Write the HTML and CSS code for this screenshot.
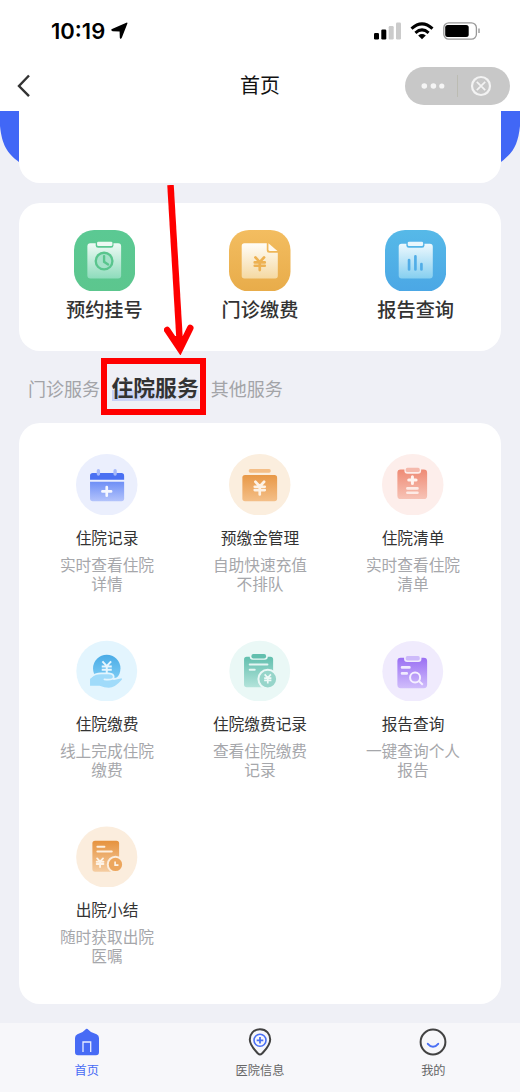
FILE: index.html
```html
<!DOCTYPE html>
<html lang="zh-CN">
<head>
<meta charset="utf-8">
<title>首页</title>
<link rel="stylesheet" href="styles.css">
</head>
<body>
<svg class="defs" aria-hidden="true">
  <defs>
    <linearGradient id="gGreen" x2="0" y2="1"><stop stop-color="#5bc993"/><stop offset="1" stop-color="#5cc68e"/></linearGradient>
    <linearGradient id="gGreenDoc" x2="0" y2="1"><stop stop-color="#effaf5"/><stop offset="1" stop-color="#8edcbc"/></linearGradient>
    <linearGradient id="gYellow" x2="0" y2="1"><stop stop-color="#f3bd60"/><stop offset="1" stop-color="#e8ac4a"/></linearGradient>
    <linearGradient id="gYellowDoc" x2="0" y2="1"><stop stop-color="#fffdf8"/><stop offset="1" stop-color="#f5d9a2"/></linearGradient>
    <linearGradient id="gBlue" x2="0" y2="1"><stop stop-color="#56b9e8"/><stop offset="1" stop-color="#4ba7e5"/></linearGradient>
    <linearGradient id="gBlueDoc" x2="0" y2="1"><stop stop-color="#eef9fe"/><stop offset="1" stop-color="#86cff0"/></linearGradient>
    <linearGradient id="gCal" x2="0" y2="1"><stop stop-color="#6f8ff6"/><stop offset="1" stop-color="#b3c3fb"/></linearGradient>
    <linearGradient id="gOrange" x2="0" y2="1"><stop stop-color="#e89847"/><stop offset="1" stop-color="#f4bf88"/></linearGradient>
    <linearGradient id="gRed" x2="0" y2="1"><stop stop-color="#ee8a74"/><stop offset="1" stop-color="#f7c3b6"/></linearGradient>
    <linearGradient id="gCoin" x2="0" y2="1"><stop stop-color="#49abe6"/><stop offset="1" stop-color="#83d0f6"/></linearGradient>
    <linearGradient id="gTeal" x2="0" y2="1"><stop stop-color="#62bfae"/><stop offset="1" stop-color="#b3e3da"/></linearGradient>
    <linearGradient id="gPurple" x2="0" y2="1"><stop stop-color="#9a6ff3"/><stop offset="1" stop-color="#d0bdfb"/></linearGradient>
    <linearGradient id="gSummary" x2="0" y2="1"><stop stop-color="#e6923d"/><stop offset="1" stop-color="#f5cda2"/></linearGradient>
    <path id="yen" d="M-13-18 0-4 13-18M0-4V20M-15-3H15M-15 7H15"/>
  </defs>
</svg>
<div class="app">
  <header class="header">
    <div class="status">
      <div class="clock">10:19<svg class="locate" viewBox="0 0 17 18"><path d="M15.3.8Q16.9.1 16.3 1.8L10.8 15.8Q9.6 18 8.8 15.8L8.6 9.6 1.6 9.2Q-.9 8.4 1 7Z"/></svg></div>
      <div class="indicators">
        <svg class="signal" viewBox="0 0 28 18"><rect x="0" y="11" width="5" height="6.5" rx="1.2"/><rect x="7.3" y="7.5" width="5" height="10" rx="1.2"/><g fill="#cbcbcb"><rect x="14.7" y="4" width="5" height="13.5" rx="1.2"/><rect x="22" y=".5" width="5" height="17" rx="1.2"/></g></svg>
        <svg class="wifi" viewBox="0 0 24 18"><g fill="none" stroke="#000" stroke-width="3"><path d="M1.5 6.6Q12-2.8 22.5 6.6"/><path d="M5.4 10.8Q12 5 18.6 10.8"/></g><path d="M8.2 13.4Q12 10.7 15.8 13.4L12 17.3Z"/></svg>
        <svg class="battery" viewBox="0 0 38 18"><rect x=".8" y=".8" width="32.6" height="16.4" rx="5" fill="#fff" stroke="#999" stroke-width="1.3"/><rect x="2.2" y="3" width="23.5" height="12" rx="2.5"/><path d="M36 6.5V11" stroke="#999" stroke-width="1.4"/></svg>
      </div>
    </div>
    <div class="nav">
      <svg class="back" viewBox="0 0 14 24"><path d="M12 1.5 2 12 12 22.2" fill="none" stroke="#333" stroke-width="2.4"/></svg>
      <h1 class="title">首页</h1>
      <div class="capsule">
        <svg class="dots" viewBox="0 0 24 8"><circle cx="3.3" cy="4" r="2.8"/><circle cx="12.4" cy="4" r="2.8"/><circle cx="20.8" cy="4" r="2.6"/></svg>
        <span class="divider"></span>
        <svg class="close" viewBox="0 0 22 22"><g fill="none" stroke="#f3f3f3"><circle cx="11" cy="11" r="9" stroke-width="2.2"/><path d="M6.8 6.8 15.2 15.2M15.2 6.8 6.8 15.2" stroke-width="1.7"/></g></svg>
      </div>
    </div>
  </header>

  <div class="hero">
    <svg class="hero-bg" viewBox="0 0 520 73" preserveAspectRatio="none"><path d="M0 0H520V15C518 34 513 42 501 51Q480 68 440 68H80Q40 68 19 51C7 42 2 34 0 15Z" fill="#4167f6"/></svg>
    <div class="banner"></div>
  </div>

  <section class="quick">
    <div class="quick-item">
      <svg class="quick-icon" viewBox="0 0 184 184"><rect width="183" height="184" rx="60" fill="url(#gGreen)"/><rect x="40" y="40" width="101" height="105" rx="9" fill="url(#gGreenDoc)"/><rect x="65" y="31" width="53" height="22" rx="7" fill="#5bc891"/><rect x="69" y="35" width="46" height="13" rx="4" fill="#edf9f3"/><circle cx="90" cy="93" r="25" fill="#a5e2c9" stroke="#59c58d" stroke-width="7"/><path d="M90 78V95L102 103" fill="none" stroke="#59c58d" stroke-width="7" stroke-linecap="round"/></svg>
      <span class="quick-name">预约挂号</span>
    </div>
    <div class="quick-item">
      <svg class="quick-icon" viewBox="0 0 184 184"><rect width="184" height="184" rx="60" fill="url(#gYellow)"/><path d="M46 40H113V61Q113 68 120 68H146V137Q146 145 138 145H46Q38 145 38 137V48Q38 40 46 40Z" fill="url(#gYellowDoc)"/><path d="M118 40 145 63H123Q118 63 118 58Z" fill="#fffaf0"/><use href="#yen" transform="translate(92 100)" fill="none" stroke="#edb152" stroke-width="8" stroke-linecap="round"/></svg>
      <span class="quick-name">门诊缴费</span>
    </div>
    <div class="quick-item">
      <svg class="quick-icon" viewBox="0 0 184 184"><rect width="183" height="185" rx="60" fill="url(#gBlue)"/><rect x="41" y="41" width="102" height="104" rx="9" fill="url(#gBlueDoc)"/><rect x="64" y="31" width="54" height="22" rx="7" fill="#54b5e8"/><rect x="68" y="35" width="46" height="13" rx="4" fill="#e9f7fd"/><path d="M72 90V118M91 79V118M109 102V118" stroke="#51ade7" stroke-width="8" stroke-linecap="round"/></svg>
      <span class="quick-name">报告查询</span>
    </div>
  </section>

  <nav class="tabs">
    <span class="tab">门诊服务</span>
    <span class="tab tab-active">住院服务</span>
    <span class="tab">其他服务</span>
    <svg class="arrow" viewBox="0 0 30 170"><g fill="none" stroke="#f00"><path d="M6.5 0 15.5 153" stroke-width="6.5"/><path d="M3.2 145 16 164 26.3 143" stroke-width="6.5" stroke-linecap="round"/></g><path d="M7 151 16 168.5 24 151Z" fill="#f00"/></svg>
    <div class="marker"></div>
  </nav>

  <section class="services">
    <div class="service">
      <svg class="service-icon" viewBox="0 0 184 184"><circle cx="92" cy="92" r="92" fill="#ebeffd"/><path d="M42 77V65Q42 57 50 57H136Q144 57 144 65V77Z" fill="#4a70f2"/><path d="M42 83H144V133Q144 141 136 141H50Q42 141 42 133Z" fill="url(#gCal)"/><path d="M67 50V60M117 50V60" stroke="#a6b9fa" stroke-width="10" stroke-linecap="round"/><path d="M92 99V125M79 112H105" stroke="#f5f7ff" stroke-width="8" stroke-linecap="round"/></svg>
      <span class="service-name">住院记录</span>
      <span class="service-desc">实时查看住院详情</span>
    </div>
    <div class="service">
      <svg class="service-icon" viewBox="0 0 184 184"><circle cx="92" cy="92" r="92" fill="#fbeede"/><rect x="59" y="45" width="66" height="11" rx="5" fill="#f4be87"/><rect x="40" y="63" width="104" height="78" rx="8" fill="url(#gOrange)"/><use href="#yen" transform="translate(92 101)" fill="none" stroke="#fdf2e6" stroke-width="8" stroke-linecap="round"/></svg>
      <span class="service-name">预缴金管理</span>
      <span class="service-desc">自助快速充值不排队</span>
    </div>
    <div class="service">
      <svg class="service-icon" viewBox="0 0 184 184"><circle cx="92" cy="92" r="92" fill="#fdeeeb"/><rect x="46" y="46" width="89" height="89" rx="10" fill="url(#gRed)"/><rect x="67" y="37" width="50" height="22" rx="9" fill="#fdeeeb"/><rect x="71" y="41" width="42" height="13" rx="5" fill="#f5b9ac"/><path d="M91 68V88M80 78H102" stroke="#fff3ef" stroke-width="9" stroke-linecap="round"/><path d="M76 103H106M76 116H106" stroke="#fdebe6" stroke-width="8" stroke-linecap="round"/></svg>
      <span class="service-name">住院清单</span>
      <span class="service-desc">实时查看住院清单</span>
    </div>
    <div class="service">
      <svg class="service-icon" viewBox="0 0 184 184"><circle cx="92" cy="93" r="91" fill="#e3f5fe"/><circle cx="92" cy="85" r="41" fill="url(#gCoin)"/><use href="#yen" transform="translate(92 82)" fill="none" stroke="#e7f6fe" stroke-width="6"/><path d="M42 117Q55 101 74 101H99Q114 101 115 117L133 114Q141 114 136 120Q117 143 98 143Q85 143 71 137H42Z" fill="#a0dbfa"/><path d="M45 110Q57 100 75 100H98Q113 101 113 111Q111 121 85 118M113 117 136 112" fill="none" stroke="#e3f5fe" stroke-width="5" stroke-linecap="round"/></svg>
      <span class="service-name">住院缴费</span>
      <span class="service-desc">线上完成住院缴费</span>
    </div>
    <div class="service">
      <svg class="service-icon" viewBox="0 0 184 184"><circle cx="92" cy="93" r="91" fill="#eaf8f6"/><rect x="45" y="50" width="87" height="91" rx="8" fill="url(#gTeal)"/><rect x="62" y="38" width="54" height="21" rx="9" fill="#eaf8f6"/><rect x="67" y="42" width="44" height="13" rx="6" fill="#62bfae"/><path d="M62 73H115M62 89H77" stroke="#e5f6f3" stroke-width="6" stroke-linecap="round"/><circle cx="116" cy="117" r="28" fill="#97d5ca" stroke="#eaf8f6" stroke-width="6"/><use href="#yen" transform="translate(116 116) scale(.72)" fill="none" stroke="#effaf8" stroke-width="7"/></svg>
      <span class="service-name">住院缴费记录</span>
      <span class="service-desc">查看住院缴费记录</span>
    </div>
    <div class="service">
      <svg class="service-icon" viewBox="0 0 184 184"><circle cx="92" cy="94" r="91" fill="#f0ebfd"/><rect x="46" y="53" width="89" height="91" rx="10" fill="url(#gPurple)"/><rect x="66" y="44" width="52" height="22" rx="9" fill="#f0ebfd"/><rect x="71" y="48" width="42" height="13" rx="5" fill="#cdbafa"/><path d="M60 82H82M60 100H74" stroke="#f1ebff" stroke-width="8" stroke-linecap="round"/><circle cx="99" cy="112" r="15" fill="none" stroke="#f5f0ff" stroke-width="6"/><path d="M110 123 122 134" stroke="#f5f0ff" stroke-width="6"/></svg>
      <span class="service-name">报告查询</span>
      <span class="service-desc">一键查询个人报告</span>
    </div>
    <div class="service">
      <svg class="service-icon" viewBox="0 0 184 184"><g transform="translate(0 1)"><circle cx="92" cy="92" r="91.5" fill="#fbeddd"/><rect x="49" y="43" width="80" height="93" rx="8" fill="url(#gSummary)"/><path d="M64 61H85M64 75H107" stroke="#fdf0e0" stroke-width="6" stroke-linecap="round"/><use href="#yen" transform="translate(72 108) scale(.68)" fill="none" stroke="#fdf3e7" stroke-width="8" stroke-linecap="round"/><circle cx="118" cy="114" r="23" fill="#eca65d" stroke="#fbeddd" stroke-width="6"/><path d="M117 105V116H127" fill="none" stroke="#fdf3e7" stroke-width="5"/></g></svg>
      <span class="service-name">出院小结</span>
      <span class="service-desc">随时获取出院医嘱</span>
    </div>
  </section>

  <footer class="tabbar">
    <div class="tabbar-item tabbar-on">
      <svg class="tabbar-icon" viewBox="0 0 28 28"><path d="M12.2 1.7Q13.8 0 15.4 1.7L18 4 23.6 6.2Q26 7.4 26 10V24Q26 27.3 23 27.3H5Q2 27.3 2 24V10Q2 7.4 4.4 6.2L9.6 4Z" fill="#476bf5"/><path d="M10 24V14H17.7V24" fill="none" stroke="#e8edff" stroke-width="1.3"/></svg>
      <span>首页</span>
    </div>
    <div class="tabbar-item">
      <svg class="tabbar-icon" viewBox="0 0 28 28"><g fill="none"><path d="M14 1.3C7.5 1.3 3.8 6 3.8 11.5 3.8 17.5 8.2 21.2 12 25.6Q14 27.4 16 25.6C19.8 21.2 24.2 17.5 24.2 11.5 24.2 6 20.5 1.3 14 1.3Z" stroke="#424242" stroke-width="2"/><g stroke="#4b70f4"><circle cx="14" cy="12.3" r="6" stroke-width="1.6"/><path d="M14 9V15.6M10.7 12.3H17.3" stroke-width="1.8"/></g></g></svg>
      <span>医院信息</span>
    </div>
    <div class="tabbar-item">
      <svg class="tabbar-icon" viewBox="0 0 28 28"><circle cx="14" cy="14" r="12.4" fill="none" stroke="#424242" stroke-width="2"/><path d="M8.8 15.8Q14 21.8 19.2 15.8" fill="none" stroke="#4b70f4" stroke-width="2" stroke-linecap="round"/></svg>
      <span>我的</span>
    </div>
  </footer>
</div>
</body>
</html>
```
FILE: styles.css
```css
* { box-sizing: border-box; }
body {
  margin: 0;
  background: #eff0f6;
  color: #333;
  font-family: "Noto Sans CJK SC", sans-serif;
}
svg { display: block; flex: none; }
.defs { position: absolute; width: 0; height: 0; }
.app {
  display: flex;
  flex-direction: column;
  width: 520px;
  height: 1092px;
  overflow: hidden;
}

.header { height: 110.5px; flex: none; background: #fff; }
.status {
  display: flex;
  justify-content: space-between;
  align-items: center;
  height: 62px;
  padding: 0 39px 0 51px;
}
.clock {
  display: flex;
  align-items: center;
  gap: 6px;
  color: #000;
  font: 600 22px/26px Inter, sans-serif;
  letter-spacing: 0;
}
.locate { width: 17px; height: 18px; }
.indicators { display: flex; align-items: center; gap: 8px; }
.signal { width: 28px; height: 18px; }
.wifi { width: 24px; height: 18px; }
.battery { width: 38px; height: 18px; margin-left: 1px; }
.nav {
  display: grid;
  grid-template-columns: 1fr auto 1fr;
  align-items: center;
  height: 48px;
  padding: 0 10px 0 17px;
}
.back { width: 14px; height: 24px; }
.title {
  margin: 0 7px 3px 0;
  color: #111;
  font-size: 20px;
  font-weight: 400;
  line-height: 28px;
}
.capsule {
  display: flex;
  align-items: center;
  justify-self: end;
  width: 105px;
  height: 38px;
  padding-left: 16px;
  border-radius: 19px;
  background: #c8c8c8;
}
.dots { width: 24px; height: 8px; fill: #f5f5f5; }
.divider { width: 1px; height: 22px; margin: 0 12px; background: #bcbcb3; }
.close { width: 22px; height: 22px; }

.hero { position: relative; flex: none; height: 72.5px; padding: 0 19px; }
.hero-bg { position: absolute; inset: 0; width: 520px; height: 73px; }
.banner {
  position: relative;
  height: 100%;
  border-radius: 0 0 21px 21px;
  background: #fff;
}

.quick {
  display: grid;
  grid-template-columns: repeat(3, 1fr);
  flex: none;
  height: 148.5px;
  margin: 19.5px 19px 0;
  padding: 27px 7.5px 0;
  border-radius: 21px;
  background: #fff;
}
.quick-item { display: flex; flex-direction: column; align-items: center; }
.quick-icon { width: 61.5px; height: 61.5px; }
.quick-name {
  margin-top: 4px;
  font-size: 19.2px;
  font-weight: 500;
  line-height: 28px;
}

.tabs {
  position: relative;
  display: flex;
  align-items: center;
  flex: none;
  height: 71.5px;
  padding: 0 28px;
}
.tab { color: #a3a4a8; font-size: 18px; line-height: 26px; padding-top: 3px; }
.tab-active {
  margin: 0 12px 0 11.5px;
  padding: 0;
  background: linear-gradient(90deg, #c5cff7, #e5e8f6) 0 19px / 100% 11px no-repeat;
  color: #333;
  font-size: 21.8px;
  font-weight: 700;
  line-height: 32px;
}
.arrow { position: absolute; left: 164px; top: -166.5px; width: 30px; height: 170px; }
.marker {
  position: absolute;
  left: 101px;
  top: 6.5px;
  width: 105px;
  height: 57px;
  border: 6px solid #f00;
}

.services {
  display: grid;
  grid-template-columns: repeat(3, 1fr);
  grid-auto-rows: 186px;
  flex: none;
  height: 581px;
  margin: 0 19px;
  padding: 31px 11.5px 0;
  border-radius: 21px;
  background: #fff;
}
.service { display: flex; flex-direction: column; align-items: center; }
.service-icon { width: 61.5px; height: 61.5px; }
.service-name { margin-top: 11px; font-size: 15.7px; line-height: 24px; }
.service-desc {
  width: 97px;
  margin-top: 6px;
  color: #a6a7ab;
  font-size: 15.7px;
  font-weight: 400;
  line-height: 18.5px;
  text-align: center;
}

.tabbar {
  display: grid;
  grid-template-columns: repeat(3, 1fr);
  flex: none;
  height: 69px;
  margin-top: auto;
  padding-top: 5px;
  background: #f7f7fa;
}
.tabbar-item {
  display: flex;
  flex-direction: column;
  align-items: center;
  gap: 4.5px;
  color: #666;
  font-size: 12.2px;
  line-height: 18px;
}
.tabbar-icon { width: 28px; height: 28px; }
.tabbar-on { color: #476bf5; }
```
